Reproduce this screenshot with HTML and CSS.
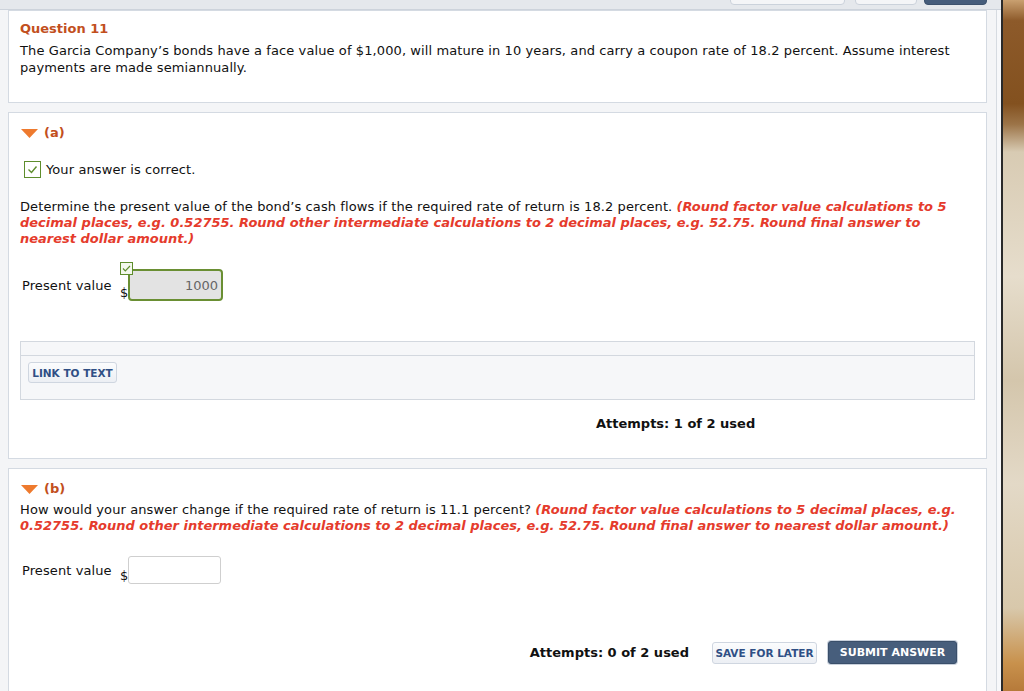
FILE: index.html
```html
<!DOCTYPE html>
<html lang="en">
<head>
  <meta charset="UTF-8" />
  <title>Question 11</title>
  <link rel="stylesheet" href="styles.css">
</head>
<body>
  <div class="screen">
    <div class="window">
      <div class="toolbar">
        <span class="tool-btn wide"></span>
        <span class="tool-btn"></span>
        <span class="tool-btn dark"></span>
      </div>
      <div class="viewport">
        <div class="page">

          <section class="card question">
            <h2 class="q-title">Question 11</h2>
            <p class="q-text">The Garcia Company’s bonds have a face value of $1,000, will mature in 10 years, and carry a coupon rate of 18.2 percent. Assume interest payments are made semiannually.</p>
          </section>

          <section class="card part">
            <div class="part-head">
              <svg class="caret" width="17" height="9" viewBox="0 0 17 9"><path d="M0 0h17L8.5 9z" fill="#ee7a2e"/></svg>
              <span>(a)</span>
            </div>
            <div class="correct">
              <span class="check-box">
                <svg width="11" height="9" viewBox="0 0 11 9"><path d="M1.5 4.5l3 3 5-6" fill="none" stroke="#5e8d2c" stroke-width="1.4"/></svg>
              </span>
              <span>Your answer is correct.</span>
            </div>
            <p class="prompt">Determine the present value of the bond’s cash flows if the required rate of return is 18.2 percent. <em class="note">(Round factor value calculations to 5 decimal places, e.g. 0.52755. Round other intermediate calculations to 2 decimal places, e.g. 52.75. Round final answer to nearest dollar amount.)</em></p>
            <div class="answer-row">
              <label class="answer-label">Present value</label>
              <span class="dollar">$</span>
              <span class="field">
                <span class="badge">
                  <svg width="9" height="7" viewBox="0 0 9 7"><path d="M1 3.5l2.3 2.3L8 1" fill="none" stroke="#5e8d2c" stroke-width="1.2"/></svg>
                </span>
                <input class="answer-input done" type="text" value="1000" readonly>
              </span>
            </div>
            <div class="resources">
              <div class="resources-strip"></div>
              <div class="resources-body">
                <button class="btn-light small">LINK TO TEXT</button>
              </div>
            </div>
            <div class="footer first">
              <span class="attempts">Attempts: 1 of 2 used</span>
            </div>
          </section>

          <section class="card part">
            <div class="part-head">
              <svg class="caret" width="17" height="9" viewBox="0 0 17 9"><path d="M0 0h17L8.5 9z" fill="#ee7a2e"/></svg>
              <span>(b)</span>
            </div>
            <p class="prompt tight">How would your answer change if the required rate of return is 11.1 percent? <em class="note">(Round factor value calculations to 5 decimal places, e.g. 0.52755. Round other intermediate calculations to 2 decimal places, e.g. 52.75. Round final answer to nearest dollar amount.)</em></p>
            <div class="answer-row">
              <label class="answer-label">Present value</label>
              <span class="dollar">$</span>
              <span class="field">
                <input class="answer-input" type="text" value="">
              </span>
            </div>
            <div class="footer last">
              <span class="attempts">Attempts: 0 of 2 used</span>
              <button class="btn-light">SAVE FOR LATER</button>
              <button class="btn-dark">SUBMIT ANSWER</button>
            </div>
          </section>

        </div>
        <div class="scrollbar"></div>
      </div>
    </div>
    <div class="wallpaper"></div>
  </div>
</body>
</html>
```

FILE: styles.css
```css
  html, body {
    margin: 0;
    padding: 0;
    font-family: "DejaVu Sans", Verdana, sans-serif;
    font-size: 13px;
    letter-spacing: 0.1px;
    color: #111;
    overflow: hidden;
  }

  .screen {
    display: flex;
    height: 691px;
    overflow: hidden;
  }

  .window {
    width: 1001px;
    display: flex;
    flex-direction: column;
    background: #f4f5f7;
    border-right: 2px solid #2a2a2a;
  }

  .toolbar {
    flex-shrink: 0;
    height: 9px;
    display: flex;
    justify-content: flex-end;
    padding-right: 14px;
    background: #e5e8ec;
    border-bottom: 1px solid #cdd3db;
    overflow: hidden;
  }

  .tool-btn {
    flex-shrink: 0;
    width: 115px;
    height: 30px;
    margin-top: -25px;
    margin-left: 10px;
    background: #f4f5f7;
    border: 1px solid #cbd2db;
    border-radius: 4px;
    box-sizing: border-box;
  }

  .tool-btn:nth-child(2) {
    width: 62px;
  }

  .tool-btn.dark {
    width: 63px;
    margin-left: 7px;
    background: #465d7b;
    border-color: #3d526d;
  }

  .viewport {
    flex: 1;
    display: flex;
    min-height: 0;
  }

  .page {
    flex: 1;
    padding: 0 9px 0 8px;
  }

  .scrollbar {
    width: 4px;
    border-left: 1px solid #d6dbe1;
    background: #f7f8fa;
  }

  .wallpaper {
    flex: 1;
    background: linear-gradient(180deg, #c9a070 0, #8d5a2a 3%, #83511f 15%, #9c7448 18%, #d8cbb3 22%, #e6ddcc 40%, #d4c6ac 55%, #e3d9c7 70%, #d8c8ab 88%, #c8914c 96%, #b67a3a 100%);
  }

  .card {
    background: #fff;
    border: 1px solid #d4dae2;
    margin-bottom: 9px;
    padding: 0 11px;
  }

  .question {
    padding-top: 10px;
    padding-bottom: 26px;
  }

  .q-title {
    margin: 0;
    font-size: 13px;
    line-height: 16px;
    letter-spacing: 0;
    color: #c24f1d;
  }

  .q-text {
    margin: 5px 0 0;
    line-height: 17px;
  }

  .part {
    padding-top: 11px;
  }

  .part:last-child {
    height: 300px;
  }

  .part-head {
    display: flex;
    align-items: center;
    gap: 6px;
    height: 16px;
    font-weight: bold;
    letter-spacing: 0;
    color: #c24f1d;
  }

  .caret {
    margin-left: 1px;
    margin-top: 2px;
  }

  .correct {
    display: flex;
    align-items: center;
    gap: 5px;
    margin-top: 21px;
    padding-left: 4px;
    line-height: 17px;
  }

  .check-box {
    width: 15px;
    height: 15px;
    border: 1px solid #5e8d2c;
    display: flex;
    align-items: center;
    justify-content: center;
    background: #fff;
  }

  .prompt {
    margin: 21px 0 0;
    line-height: 16px;
  }

  .prompt.tight {
    margin-top: 6px;
  }

  .note {
    color: #e53b2c;
    font-weight: bold;
    letter-spacing: 0;
  }

  .answer-row {
    display: flex;
    align-items: center;
    margin-top: 22px;
    padding-left: 2px;
  }

  .answer-label {
    width: 98px;
  }

  .dollar {
    align-self: flex-end;
    width: 8px;
    line-height: 14px;
    margin-bottom: 1px;
  }

  .field {
    position: relative;
    display: flex;
  }

  .badge {
    position: absolute;
    top: -7px;
    left: -8px;
    width: 11px;
    height: 11px;
    border: 1px solid #5e8d2c;
    background: #f3f8ec;
    display: flex;
    align-items: center;
    justify-content: center;
  }

  .answer-input {
    width: 93px;
    height: 28px;
    box-sizing: border-box;
    border: 1px solid #cfcfcf;
    border-radius: 3px;
    padding: 0 3px;
    font-family: inherit;
    font-size: 13px;
    text-align: right;
    color: #666;
    background: #fff;
  }

  .answer-input.done {
    width: 95px;
    height: 32px;
    border: 2px solid #6a8f33;
    border-radius: 4px;
    background: #e3e3e3;
  }

  .resources {
    margin-top: 40px;
    border: 1px solid #d3d8df;
    background: #f6f7f9;
  }

  .resources-strip {
    height: 13px;
    border-bottom: 1px solid #d3d8df;
  }

  .resources-body {
    padding: 6px 7px 16px;
  }

  .btn-light,
  .btn-dark {
    font-family: inherit;
    font-weight: bold;
    font-size: 10.5px;
    letter-spacing: 0;
    white-space: nowrap;
    padding: 0;
    border-radius: 3px;
    cursor: pointer;
  }

  .btn-light {
    height: 22px;
    color: #2f4f85;
    background: linear-gradient(#fbfcfd, #eceff4);
    border: 1px solid #cfd6e0;
  }

  .btn-light.small {
    width: 89px;
    height: 21px;
  }

  .btn-dark {
    height: 23px;
    font-size: 11px;
    color: #fff;
    background: #475e7c;
    border: 1px solid #3a4f6a;
    box-shadow: 0 0 0 1px #c9d1dc;
  }

  .footer {
    display: flex;
    align-items: center;
  }

  .footer.first {
    margin-top: 16px;
    padding: 0 0 26px 576px;
    line-height: 16px;
  }

  .footer.last {
    justify-content: flex-end;
    margin-top: 57px;
    padding-right: 18px;
  }

  .attempts {
    font-weight: bold;
    letter-spacing: 0;
  }

  .footer.last .attempts {
    margin-right: 23px;
  }

  .footer.last .btn-light {
    width: 105px;
    margin-right: 11px;
  }

  .footer.last .btn-dark {
    width: 129px;
  }
```
